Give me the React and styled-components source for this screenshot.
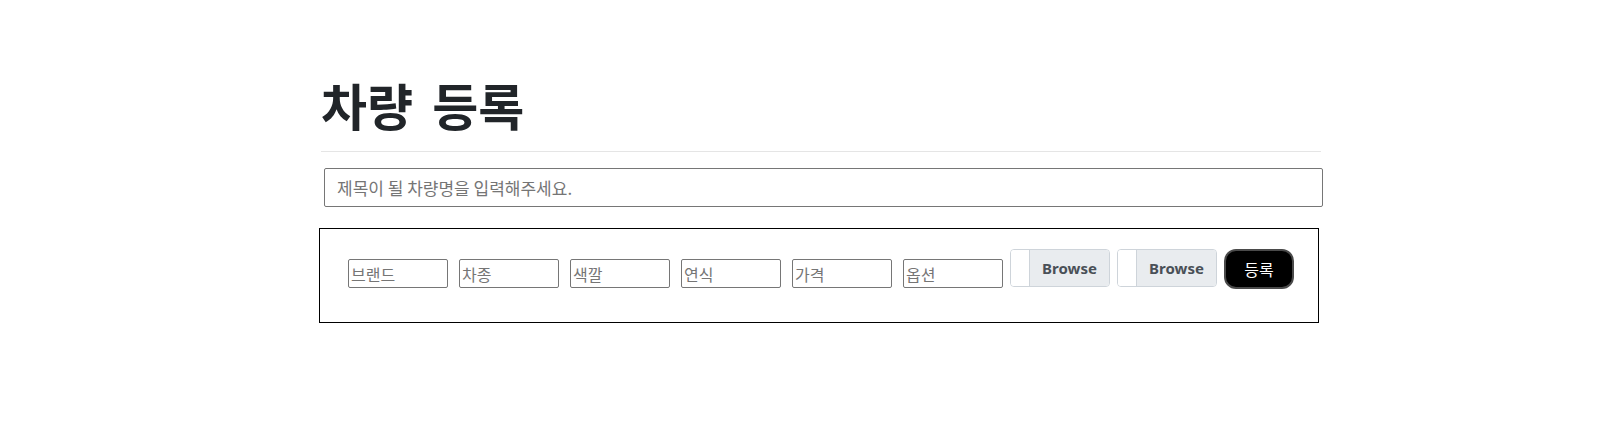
import styled, { createGlobalStyle } from "styled-components";

const GlobalStyle = createGlobalStyle`
  body {
    margin: 0;
    background: #fff;
    font-family: "Noto Sans", "Noto Sans CJK KR", sans-serif;
    color: #212529;
  }
`;

const fields = ["브랜드", "차종", "색깔", "연식", "가격", "옵션"];

const App = () => {
  return (
    <>
      <GlobalStyle />
      <Page>
        <Title>차량 등록</Title>
        <Divider />
        <TitleInput placeholder="제목이 될 차량명을 입력해주세요." />
        <FormBox>
          {fields.map((f) => (
            <SmallInput key={f} placeholder={f} />
          ))}
          <FileBox>
            <FileEmpty />
            <FileButton>Browse</FileButton>
          </FileBox>
          <FileBox>
            <FileEmpty />
            <FileButton>Browse</FileButton>
          </FileBox>
          <SubmitButton>등록</SubmitButton>
        </FormBox>
      </Page>
    </>
  );
};

const Page = styled.div`
  width: 1002px;
  margin-left: 319px;
  padding-top: 75px;
`;

const Title = styled.h1`
  margin: 0 0 0 2px;
  font-family: "Noto Sans CJK KR", sans-serif;
  font-size: 50px;
  font-weight: 700;
  line-height: 58px;
  word-spacing: 8px;
  color: #212529;
`;

const Divider = styled.hr`
  margin: 18px 0 0 2px;
  width: 1000px;
  border: 0;
  border-top: 1px solid #e5e5e5;
`;

const TitleInput = styled.input`
  display: block;
  box-sizing: border-box;
  margin: 16px 0 0 5px;
  width: 999px;
  height: 39px;
  padding: 0 12px;
  border: 1px solid #767676;
  border-radius: 2px;
  font-family: "Noto Sans CJK KR", sans-serif;
  font-size: 17px;
  color: #212529;

  &::placeholder {
    color: #757575;
  }
`;

const FormBox = styled.div`
  box-sizing: border-box;
  display: flex;
  align-items: flex-start;
  margin-top: 21px;
  width: 1000px;
  height: 95px;
  padding: 20px 0 0 28px;
  border: 1px solid #000;
`;

const SmallInput = styled.input`
  box-sizing: border-box;
  width: 100px;
  height: 29px;
  margin: 10px 11px 0 0;
  padding: 1px 2px;
  border: 1px solid #767676;
  border-radius: 2px;
  font-family: "Noto Sans CJK KR", sans-serif;
  font-size: 16px;

  &:nth-of-type(6) {
    margin-right: 7px;
  }

  &::placeholder {
    color: #757575;
  }
`;

const FileBox = styled.div`
  box-sizing: border-box;
  display: flex;
  width: 100px;
  height: 38px;
  margin-right: 7px;
  border: 1px solid #ced4da;
  border-radius: 4px;
  overflow: hidden;
`;

const FileEmpty = styled.div`
  width: 18px;
  background: #fff;
`;

const FileButton = styled.div`
  flex: 1;
  display: flex;
  align-items: center;
  justify-content: center;
  background: #e9ecef;
  border-left: 1px solid #ced4da;
  font-family: "Noto Sans", sans-serif;
  font-size: 15px;
  font-weight: 700;
  color: #495057;
`;

const SubmitButton = styled.button`
  box-sizing: border-box;
  width: 70px;
  height: 40px;
  background: #000;
  color: #fff;
  border: 2px solid #4a4a4a;
  border-radius: 12px;
  font-family: "Noto Sans CJK KR", sans-serif;
  font-size: 16px;
`;

export default App;
